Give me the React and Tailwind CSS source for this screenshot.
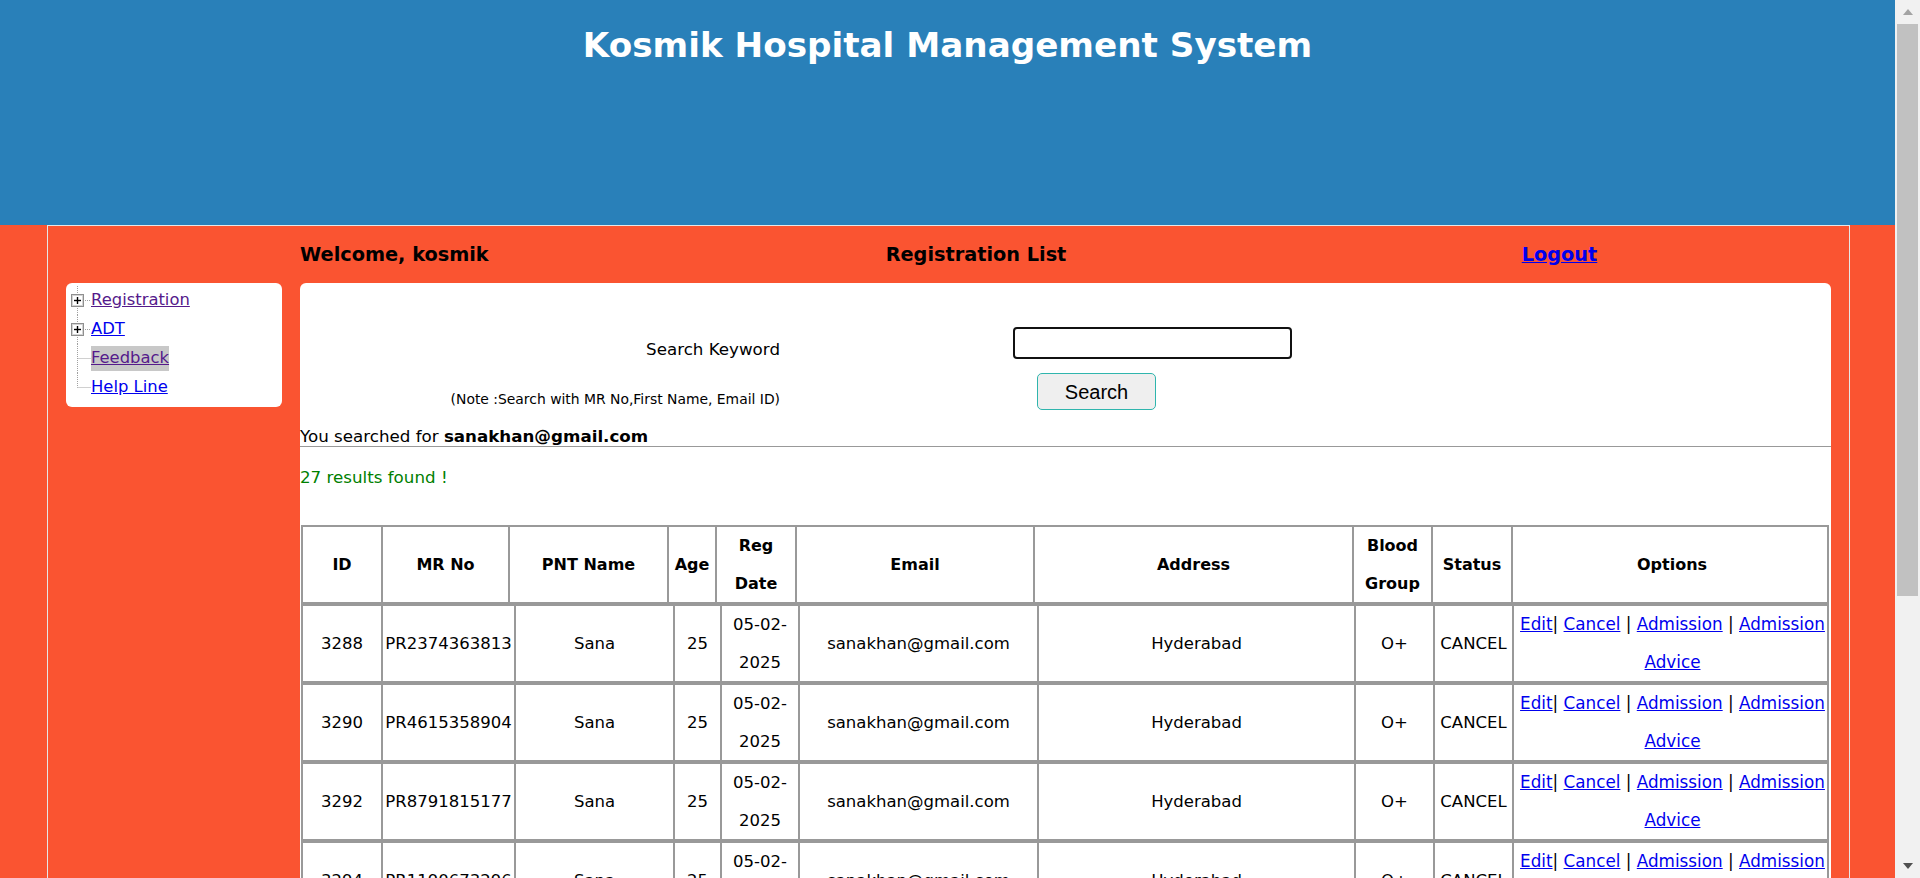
import React from 'react';

const rows = [
  { id: 3288, mr: 'PR2374363813' },
  { id: 3290, mr: 'PR4615358904' },
  { id: 3292, mr: 'PR8791815177' },
  { id: 3294, mr: 'PR1190673296' },
  { id: 3296, mr: 'PR5528140372' },
  { id: 3298, mr: 'PR6043917285' },
  { id: 3300, mr: 'PR3389205164' },
  { id: 3302, mr: 'PR7712468039' },
];

// tree glyph for the side menu: plus box or plain branch, last item closes the line
const TreeNode = ({ plus, last }) => (
  <svg width="25" height="29" viewBox="0 0 25 29" className="shrink-0">
    <line x1="11.5" y1="0" x2="11.5" y2={last ? 14.5 : 29} stroke="#a0a0a0" strokeDasharray="1 1" />
    <line x1={plus ? 17 : 11.5} y1="14.5" x2="25" y2="14.5" stroke="#a0a0a0" strokeDasharray="1 1" />
    {plus && (
      <>
        <rect x="5.5" y="8.5" width="12" height="12" fill="#fff" stroke="#8f8f8f" />
        <rect x="6.5" y="9.5" width="10" height="10" fill="#fff" stroke="#d4d4d4" />
        <line x1="8" y1="14.5" x2="15" y2="14.5" stroke="#000" strokeWidth="1.4" />
        <line x1="11.5" y1="11" x2="11.5" y2="18" stroke="#000" strokeWidth="1.4" />
      </>
    )}
  </svg>
);

const SideMenu = () => (
  <div className="bg-white rounded-[6px] pt-[3px] pb-[5px] h-[124px] text-[16.4px]">
    <div className="flex items-center h-[29px]">
      <TreeNode plus />
      <a href="#" className="text-[#551a8b] underline">Registration</a>
    </div>
    <div className="flex items-center h-[29px]">
      <TreeNode plus />
      <a href="#" className="text-[#0000ee] underline">ADT</a>
    </div>
    <div className="flex items-center h-[29px]">
      <TreeNode />
      <a href="#" className="text-[#551a8b] underline bg-[#c8c8c8]">Feedback</a>
    </div>
    <div className="flex items-center h-[29px]">
      <TreeNode last />
      <a href="#" className="text-[#0000ee] underline">Help Line</a>
    </div>
  </div>
);

const headCols = 'grid-cols-[80px_127px_159px_48px_80px_238px_319px_79px_80px_318px]';
const bodyCols = 'grid-cols-[80px_133px_159px_47px_78px_239px_317px_79px_79px_317px]';
const cell = 'flex items-center justify-center text-center border-r-2 border-[#999]';

const HeaderRow = () => (
  <div className={`grid ${headCols} w-[1528px] border-2 border-[#999] font-bold text-[16px] leading-[37.6px]`}>
    <div className={cell}>ID</div>
    <div className={cell}>MR No</div>
    <div className={cell}>PNT Name</div>
    <div className={cell}>Age</div>
    <div className={cell}>Reg Date</div>
    <div className={cell}>Email</div>
    <div className={cell}>Address</div>
    <div className={cell}>Blood Group</div>
    <div className={cell}>Status</div>
    <div className="flex items-center justify-center text-center">Options</div>
  </div>
);

const BodyRow = ({ row }) => (
  <div className={`grid ${bodyCols} w-[1528px] border-2 border-[#999] text-[16.5px] leading-[37.5px]`}>
    <div className={cell}>{row.id}</div>
    <div className={cell}>{row.mr}</div>
    <div className={cell}>Sana</div>
    <div className={cell}>25</div>
    <div className={cell}>05-02-2025</div>
    <div className={cell}>sanakhan@gmail.com</div>
    <div className={cell}>Hyderabad</div>
    <div className={cell}>O+</div>
    <div className={cell}>CANCEL</div>
    <div className="text-center px-[2px] text-[16.8px]">
      <a href="#" className="text-[#0000ee] underline">Edit</a>|{' '}
      <a href="#" className="text-[#0000ee] underline">Cancel</a> |{' '}
      <a href="#" className="text-[#0000ee] underline">Admission</a> |{' '}
      <a href="#" className="text-[#0000ee] underline">Admission Advice</a>
    </div>
  </div>
);

const ScrollBar = () => (
  <div className="w-[25px] h-full bg-[#f1f1f1] flex flex-col items-center shrink-0">
    <div className="h-[24px] w-full flex items-center justify-center">
      <svg width="10" height="6" viewBox="0 0 10 6">
        <polygon points="5,0 10,6 0,6" fill="#a3a3a3" />
      </svg>
    </div>
    <div className="w-[21px] h-[572px] bg-[#c1c1c1]"></div>
    <div className="flex-1"></div>
    <div className="h-[24px] w-full flex items-center justify-center">
      <svg width="10" height="6" viewBox="0 0 10 6">
        <polygon points="0,0 10,0 5,6" fill="#505050" />
      </svg>
    </div>
  </div>
);

const App = () => {
  return (
    <div className="flex h-[878px] overflow-hidden font-['DejaVu_Sans','Verdana',sans-serif] text-black text-[16px]">
      <div className="w-[1895px] h-full overflow-hidden bg-[#fa5431] shrink-0">
        <div className="bg-[#2980b9] h-[225px] pt-[26px]">
          <h1 className="text-center text-white font-bold text-[34.2px] leading-[39px]">
            Kosmik Hospital Management System
          </h1>
        </div>

        <div className="ml-[47px] w-[1803px] border border-[#e6e6e6] border-b-0 px-[18px] pb-[50px]">
          <div className="flex gap-[18px]">
            {/* left column */}
            <div className="w-[216px] shrink-0">
              <div className="h-[57px]"></div>
              <SideMenu />
            </div>

            {/* right column */}
            <div className="w-[1531px]">
              <div className="grid grid-cols-[376px_600px_1fr] items-center h-[57px] font-bold text-[19.3px] leading-[22px]">
                <div>Welcome, kosmik</div>
                <div className="text-center">Registration List</div>
                <div className="text-center pl-[12px]">
                  <a href="#" className="text-[#0000ee] underline">Logout</a>
                </div>
              </div>

              <div className="bg-white rounded-t-[6px] text-[16.7px]">
                <div className="pt-[44px]">
                  <div className="flex items-end">
                    <div className="w-[480px] text-right leading-[19px]">Search Keyword</div>
                    <input
                      type="text"
                      className="ml-[233px] w-[279px] h-[32px] border-2 border-[#111] rounded-[4px] bg-white outline-none"
                    />
                  </div>
                  <div className="flex items-start mt-[14px]">
                    <div className="w-[480px] text-right text-[13.9px] leading-[16px] mt-[18px]">
                      (Note :Search with MR No,First Name, Email ID)
                    </div>
                    <button className="ml-[257px] w-[119px] h-[37px] bg-[#efefef] border border-[#2fb5ad] rounded-[5px] font-['Liberation_Sans',Arial,sans-serif] text-[20px]">
                      Search
                    </button>
                  </div>
                </div>

                <div className="mt-[16px] leading-[20px]">
                  You searched for <b>sanakhan@gmail.com</b>
                </div>
                <div className="border-t border-[#999]"></div>
                <div className="mt-[21px] leading-[19px] text-[#008000]">27 results found !</div>

                <div className="mt-[38px] pl-[1px]">
                  <HeaderRow />
                  {rows.map((r) => (
                    <BodyRow key={r.id} row={r} />
                  ))}
                </div>
              </div>
            </div>
          </div>
        </div>
      </div>
      <ScrollBar />
    </div>
  );
};

export default App;
